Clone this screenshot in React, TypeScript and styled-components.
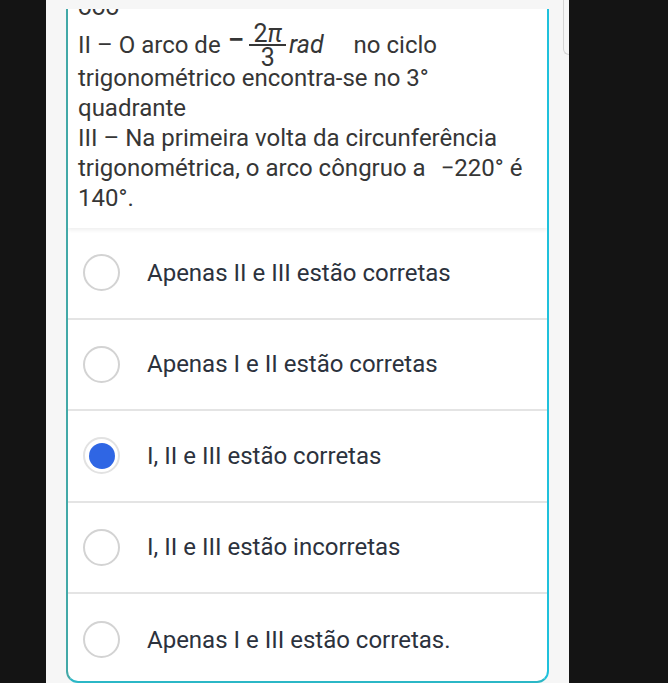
import React from "react";
import styled, { createGlobalStyle } from "styled-components";

const GlobalStyle = createGlobalStyle`
  html, body { margin: 0; padding: 0; background: #141414; overflow: hidden; }
  * { box-sizing: border-box; }
`;

const Screen = styled.div`
  width: 668px;
  height: 683px;
  display: flex;
  background: #141414;
`;

const Panel = styled.div`
  position: relative;
  margin-left: 46px;
  width: 523px;
  height: 683px;
  padding: 0 20px;
  background: #f6f6f6;
  overflow: hidden;
`;

const ScrollThumb = styled.div`
  position: absolute;
  right: 0;
  top: -10px;
  width: 6px;
  height: 65px;
  border: 1.5px solid #d4d4d4;
  border-right: none;
  border-radius: 0 0 0 6px;
`;

const Card = styled.div`
  margin-top: 9px;
  height: 674px;
  background: #ffffff;
  border: 2px solid #2bb7c6;
  border-top: none;
  border-left-color: #43a9a8;
  border-right-color: #1fc1dc;
  border-radius: 0 0 12px 12px;
  overflow: hidden;
  display: flex;
  flex-direction: column;
`;

const Question = styled.div`
  padding: 0 10px 0 10px;
  font-family: Roboto, "Noto Sans", sans-serif;
  font-size: 24px;
  line-height: 30px;
  color: #363636;
  height: 219px;
  flex-shrink: 0;
  box-shadow: 0 2px 4px rgba(0, 0, 0, 0.07);
  position: relative;
  z-index: 1;
`;

const Line = styled.div<{ $offset?: number }>`
  white-space: nowrap;
  margin-top: ${(p) => p.$offset ?? 0}px;
`;

const Minus = styled.span`
  display: inline-block;
  font-size: 30px;
  font-weight: 500;
  margin: -8px 5px -8px 7px;
  vertical-align: 3px;
`;

const Fraction = styled.span`
  display: inline-flex;
  flex-direction: column;
  align-items: center;
  vertical-align: 11px;
  margin: -7px 0 -8px;
  font-size: 25px;
`;

const Numerator = styled.span`
  line-height: 20px;
  padding: 0 4px;
`;

const Bar = styled.span`
  align-self: stretch;
  height: 2px;
  background: #363636;
`;

const Denominator = styled.span`
  line-height: 20px;
  margin-top: 2px;
`;

const Italic = styled.i`
  font-style: italic;
`;

const Rad = styled.i`
  font-style: italic;
  font-size: 25px;
  margin-left: 3px;
`;

const Gap = styled.span<{ $w: number }>`
  display: inline-block;
  width: ${(p) => p.$w}px;
`;

const Options = styled.div`
  display: flex;
  flex-direction: column;
`;

const Option = styled.label`
  display: flex;
  align-items: center;
  height: 91.5px;
  flex-shrink: 0;
  padding-left: 15px;
  gap: 27px;
  border-bottom: 2px solid #e4e4e4;
  font-family: Roboto, "Noto Sans", sans-serif;
  font-size: 24px;
  color: #2c323d;
  &:last-child { border-bottom: none; }
`;

const Radio = styled.span<{ $checked?: boolean }>`
  width: 37px;
  height: 37px;
  border-radius: 50%;
  border: 2px solid ${(p) => (p.$checked ? "#e2e2e2" : "#d3d3d3")};
  display: flex;
  align-items: center;
  justify-content: center;
  flex-shrink: 0;
  &::after {
    content: "";
    width: 26px;
    height: 26px;
    border-radius: 50%;
    background: ${(p) => (p.$checked ? "#2f66e4" : "transparent")};
  }
`;

const options = [
  { text: "Apenas II e III estão corretas", checked: false },
  { text: "Apenas I e II estão corretas", checked: false },
  { text: "I, II e III estão corretas", checked: true },
  { text: "I, II e III estão incorretas", checked: false },
  { text: "Apenas I e III estão corretas.", checked: false },
];

export default function App() {
  return (
    <Screen>
      <GlobalStyle />
      <Panel>
        <Card>
          <Question>
            <Line $offset={-17}>ooo</Line>
            <Line $offset={8}>
              II – O arco de
              <Minus>−</Minus>
              <Fraction>
                <Numerator>
                  2<Italic>π</Italic>
                </Numerator>
                <Bar />
                <Denominator>3</Denominator>
              </Fraction>
              <Rad>rad</Rad>
              <Gap $w={30} />
              no ciclo
            </Line>
            <Line $offset={3}>trigonométrico encontra-se no 3°</Line>
            <Line>quadrante</Line>
            <Line>III – Na primeira volta da circunferência</Line>
            <Line>
              trigonométrica, o arco côngruo a <Gap $w={9} />−220° é
            </Line>
            <Line>140°.</Line>
          </Question>
          <Options>
            {options.map((o) => (
              <Option key={o.text}>
                <Radio $checked={o.checked} />
                {o.text}
              </Option>
            ))}
          </Options>
        </Card>
        <ScrollThumb />
      </Panel>
    </Screen>
  );
}
